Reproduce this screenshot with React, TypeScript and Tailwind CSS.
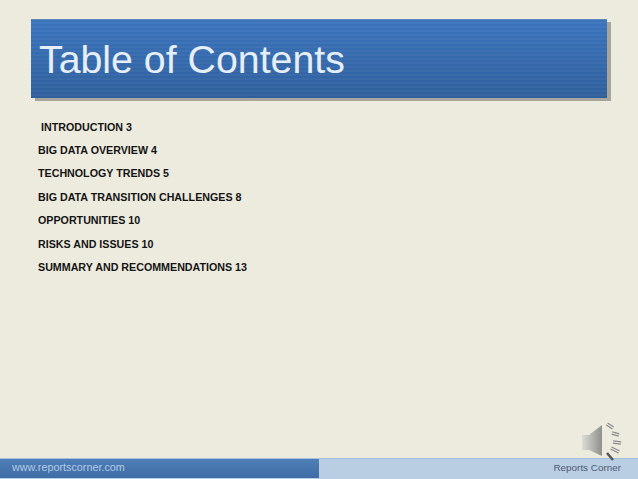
const items = [
  "BIG DATA OVERVIEW 4",
  "TECHNOLOGY TRENDS 5",
  "BIG DATA TRANSITION CHALLENGES 8",
  "OPPORTUNITIES 10",
  "RISKS AND ISSUES 10",
  "SUMMARY AND RECOMMENDATIONS 13",
];

const rays = ["M27 4 L33 8", "M32 13 L39 15", "M33 22 L41 23", "M31 28 L39 32"];

function SpeakerIcon() {
  return (
    <svg width="44" height="44" viewBox="0 0 44 44" className="blur-[0.3px]">
      <defs>
        <linearGradient id="cone" x1="0" y1="0" x2="1" y2="0">
          <stop offset="0" stopColor="#dcdcd6" />
          <stop offset="1" stopColor="#8f8f8d" />
        </linearGradient>
      </defs>
      <path d="M2 15 L9 15 L22 5 L22 36 L9 30 L2 30 Z" fill="url(#cone)" />
      {rays.map((d) => (
        <g key={d} fill="none">
          <path d={d} stroke="#8a8a88" strokeWidth="3.4" />
          <path d={d} stroke="#ecebe4" strokeWidth="1.2" />
        </g>
      ))}
      <path d="M27 33 L33 40" stroke="#55565a" strokeWidth="2.6" />
    </svg>
  );
}

export default function App() {
  return (
    <div className="w-[638px] h-[479px] flex flex-col bg-[#edeade] font-['Liberation_Sans',Arial,sans-serif] overflow-hidden">
      <div className="pt-[19px] pl-[31px]">
        <div className="w-[576px] h-[79px] pl-[8px] flex items-center shadow-[4px_3px_0_#a8a69c] border-t border-[#5f86b4] text-[39.3px] text-[#e6eff8] bg-[repeating-linear-gradient(to_bottom,transparent_0,transparent_2px,rgba(255,255,255,0.04)_2px,rgba(255,255,255,0.04)_4px),linear-gradient(to_bottom,#3a74bd,#2f5f9c)]">
          Table of Contents
        </div>
      </div>

      <div className="pl-[38px] pt-[22px] flex-1 flex flex-col gap-[9.5px] text-[10.7px] leading-[14px] font-bold text-[#141414]">
        <p className="pl-[3px] -mb-px">INTRODUCTION 3</p>
        {items.map((item) => (
          <p key={item}>{item}</p>
        ))}
      </div>

      <div className="flex justify-end pr-[14px] -mb-[6px] relative">
        <SpeakerIcon />
      </div>

      <div className="h-[21px] flex border-t border-[#a4c0de] bg-[#b9cde3]">
        <div className="w-[319px] pl-[12px] pb-[2px] flex items-center text-[10.8px] text-[#b3c9e6] border-b border-[#b9cde3] bg-[linear-gradient(to_bottom,#4f7fb8,#3f6ca4)]">
          www.reportscorner.com
        </div>
        <div className="flex-1 pr-[17px] pb-[2px] flex items-center justify-end text-[9.9px] text-[#4f5c70]">
          Reports Corner
        </div>
      </div>
    </div>
  );
}
